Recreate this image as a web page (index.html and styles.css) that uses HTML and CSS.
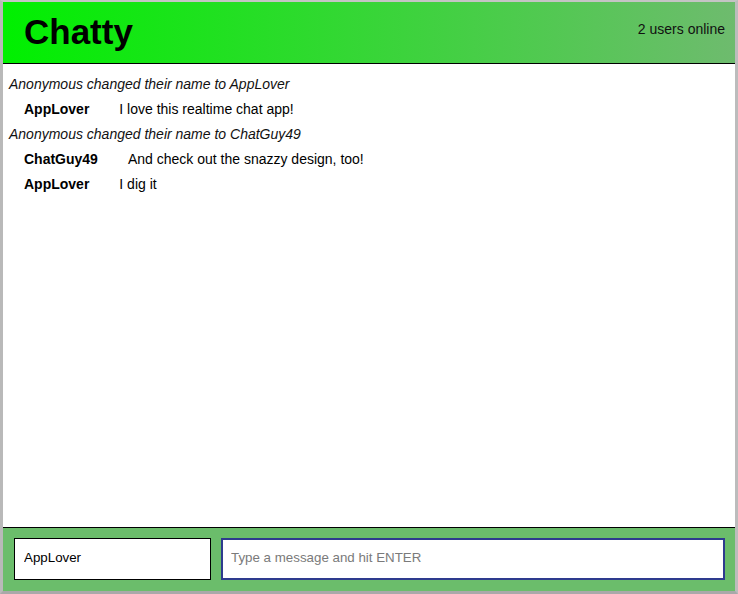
FILE: index.html
```html
<!DOCTYPE html>
<html>
<head>
<meta charset="utf-8">
<link rel="stylesheet" href="styles.css">
</head>
<body>
<div class="frame">
  <header class="navbar">
    <span class="brand">Chatty</span>
    <span class="online">2 users online</span>
  </header>
  <main class="messages">
    <div class="notice">Anonymous changed their name to AppLover</div>
    <div class="message"><span class="username">AppLover</span><span class="content">I love this realtime chat app!</span></div>
    <div class="notice">Anonymous changed their name to ChatGuy49</div>
    <div class="message"><span class="username">ChatGuy49</span><span class="content">And check out the snazzy design, too!</span></div>
    <div class="message"><span class="username">AppLover</span><span class="content">I dig it</span></div>
  </main>
  <footer class="chatbar">
    <input class="chatbar-username" value="AppLover">
    <input class="chatbar-message" placeholder="Type a message and hit ENTER">
  </footer>
</div>
</body>
</html>
```
FILE: styles.css
```css
html, body {
  margin: 0;
  padding: 0;
  height: 100%;
}
body {
  font-family: "Liberation Sans", Arial, sans-serif;
  background: #fff;
}
.frame {
  box-sizing: border-box;
  height: 594px;
  border-style: solid;
  border-width: 2px 3px 3px 3px;
  border-color: #c4c4c4 #bcbcbc #a9a9a9 #b9b9b9;
  display: flex;
  flex-direction: column;
}
.navbar {
  height: 61px;
  border-bottom: 1px solid #000;
  background: linear-gradient(to right, #00f000, #6ebb6e);
  display: flex;
  align-items: center;
  justify-content: space-between;
  padding: 0 10px 0 21px;
  flex-shrink: 0;
}
.brand {
  font-size: 35px;
  font-weight: bold;
  color: #000;
  margin-top: -2px;
}
.online {
  font-size: 14px;
  color: #111;
  margin-top: -8px;
}
.messages {
  flex: 1;
  padding-top: 8px;
  font-size: 14px;
  color: #000;
}
.notice {
  font-style: italic;
  height: 25px;
  line-height: 25px;
  padding-left: 6px;
  color: #111;
}
.message {
  height: 25px;
  line-height: 25px;
  padding-left: 21px;
}
.username {
  font-weight: bold;
  margin-right: 30px;
}
.chatbar {
  flex-shrink: 0;
  border-top: 1px solid #000;
  background: #6bbd6b;
  padding: 10px 10px 11px 11px;
  display: flex;
  gap: 10px;
}
.chatbar input {
  box-sizing: border-box;
  height: 42px;
  font-family: "Liberation Sans", Arial, sans-serif;
  font-size: 13.33px;
  background: #fff;
  margin: 0;
  outline: none;
  padding-top: 0;
  padding-bottom: 4px;
}
.chatbar-username {
  width: 197px;
  border: 1px solid #000;
  padding-left: 9px;
  padding-right: 9px;
  color: #000;
}
.chatbar-message {
  flex: 1;
  border: 2px solid #2e3b8e;
  padding-left: 8px;
  padding-right: 8px;
  color: #000;
}
.chatbar-message::placeholder {
  color: #7a7a7a;
}
```
